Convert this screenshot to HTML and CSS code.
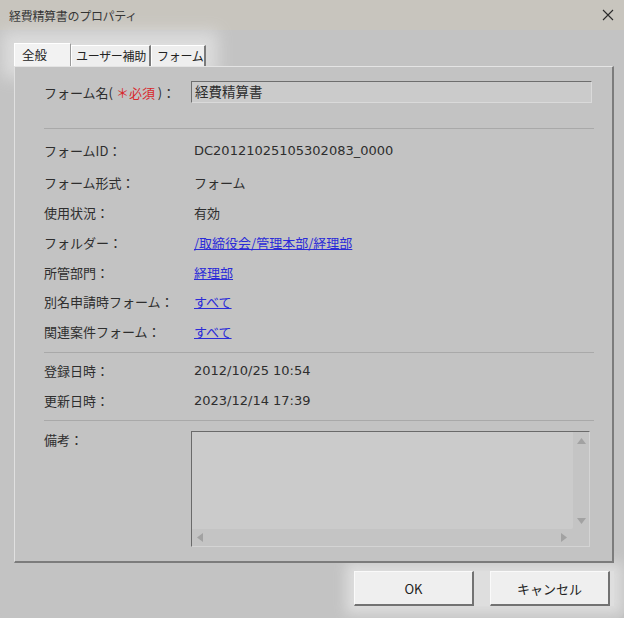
FILE: index.html
```html
<!DOCTYPE html>
<html lang="ja">
<head>
<meta charset="utf-8">
<title>経費精算書のプロパティ</title>
<link rel="stylesheet" href="styles.css">
</head>
<body>
<div class="window">
  <div class="titlebar">
    <span class="title">経費精算書のプロパティ</span>
    <svg class="close" width="12" height="12" viewBox="0 0 12 12"><path d="M1 1 L11 11 M11 1 L1 11" stroke="#2b2b2b" stroke-width="1.1" fill="none"/></svg>
  </div>
  <div class="body">
    <div class="tabs">
      <div class="tab active">全般</div>
      <div class="tab">ユーザー補助</div>
      <div class="tab">フォーム</div>
    </div>
    <div class="panel">
      <div class="row name-row">
        <div class="label">フォーム名( <span class="req">＊必須</span> )：</div>
        <div class="input">経費精算書</div>
      </div>
      <div class="sep first-sep"></div>
      <div class="group group-a">
        <div class="row info"><div class="label">フォームID：</div><div class="value">DC20121025105302083_0000</div></div>
        <div class="row info"><div class="label">フォーム形式：</div><div class="value">フォーム</div></div>
        <div class="row info"><div class="label">使用状況：</div><div class="value">有効</div></div>
        <div class="row info"><div class="label">フォルダー：</div><div class="value"><a href="#">/取締役会/管理本部/経理部</a></div></div>
        <div class="row info"><div class="label">所管部門：</div><div class="value"><a href="#">経理部</a></div></div>
        <div class="row info"><div class="label">別名申請時フォーム：</div><div class="value"><a href="#">すべて</a></div></div>
        <div class="row info"><div class="label">関連案件フォーム：</div><div class="value"><a href="#">すべて</a></div></div>
      </div>
      <div class="sep sep-a"></div>
      <div class="group group-b">
        <div class="row info"><div class="label">登録日時：</div><div class="value">2012/10/25 10:54</div></div>
        <div class="row info"><div class="label">更新日時：</div><div class="value">2023/12/14 17:39</div></div>
      </div>
      <div class="sep sep-b"></div>
      <div class="row memo-row">
        <div class="label memo-label">備考：</div>
        <div class="textarea">
          <div class="ta-main">
            <div class="ta-text"></div>
            <div class="vscroll">
              <svg width="9" height="6" viewBox="0 0 9 6"><path d="M0 6 L4.5 0 L9 6 Z" fill="#a2a2a2"/></svg>
              <svg width="9" height="6" viewBox="0 0 9 6"><path d="M0 0 L4.5 6 L9 0 Z" fill="#a2a2a2"/></svg>
            </div>
          </div>
          <div class="hscroll">
            <svg width="6" height="9" viewBox="0 0 6 9"><path d="M6 0 L0 4.5 L6 9 Z" fill="#a2a2a2"/></svg>
            <svg width="6" height="9" viewBox="0 0 6 9"><path d="M0 0 L6 4.5 L0 9 Z" fill="#a2a2a2"/></svg>
          </div>
        </div>
      </div>
    </div>
    <div class="buttons">
      <button class="btn">OK</button>
      <button class="btn">キャンセル</button>
    </div>
  </div>
</div>
</body>
</html>
```
FILE: styles.css
```css
html, body {
  margin: 0;
  padding: 0;
}
body {
  width: 624px;
  height: 618px;
  overflow: hidden;
  background: #c3c3c3;
  font-family: "DejaVu Sans", "Noto Sans CJK JP", sans-serif;
  font-size: 13px;
  color: #2e2e2e;
}
.window {
  width: 624px;
  height: 618px;
  background: #c3c3c3;
  border-bottom-left-radius: 6px;
  border-bottom-right-radius: 6px;
  overflow: hidden;
}
.titlebar {
  height: 30px;
  background: #c8c5be;
  display: flex;
  align-items: center;
  justify-content: space-between;
  padding: 0 9px 0 9px;
  box-sizing: border-box;
}
.title {
  font-family: "Noto Sans CJK JP", sans-serif;
  font-size: 12px;
  color: #333;
  letter-spacing: -0.3px;
}
.close {
  margin-right: 1px;
}
.body {
  padding: 13px 10px 0 14px;
}
.tabs {
  display: flex;
  align-items: flex-end;
  height: 23px;
  background: #dcdcdc;
  width: 192px;
  box-shadow: 0 0 16px 12px #dcdcdc;
  position: relative;
  z-index: 0;
}
.tab {
  font-family: "Noto Sans CJK JP", sans-serif;
  font-size: 12px;
  white-space: nowrap;
  height: 21px;
  line-height: 20px;
  padding: 0 0 0 4px;
  background: #eeeeee;
  border-top: 1px solid #ffffff;
  border-left: 1px solid #ffffff;
  border-right: 2px solid #7a7a7a;
  box-sizing: border-box;
  color: #222;
  overflow: hidden;
}
.tab.active {
  height: 24px;
  line-height: 22px;
  width: 57px;
  padding-left: 7px;
  font-size: 12.5px;
  background: #f2f2f2;
  border-right: 1px solid #9a9a9a;
  margin-bottom: -1px;
  position: relative;
  z-index: 2;
}
.tab:nth-child(2) { width: 80px; padding-left: 4px; letter-spacing: -0.3px; }
.tab:nth-child(3) { width: 55px; padding-left: 5px; letter-spacing: -0.3px; }
.panel {
  height: 497px;
  box-sizing: border-box;
  border-top: 1px solid #e4e4e4;
  border-left: 1px solid #e0e0e0;
  border-right: 2px solid #7c7c7c;
  border-bottom: 2px solid #7c7c7c;
  background: #c3c3c3;
  padding: 14px 16px 0 29px;
  position: relative;
  z-index: 1;
}
.row {
  display: flex;
  align-items: center;
}
.label {
  width: 147px;
  flex: none;
  font-family: "Noto Sans CJK JP", sans-serif;
  color: #2e2e2e;
  white-space: nowrap;
}
.req {
  color: #d8282c;
}
.name-row {
  height: 22px;
}
.input {
  width: 401px;
  height: 22px;
  box-sizing: border-box;
  background: #cbcbcb;
  border-top: 1px solid #6e6e6e;
  border-left: 1px solid #6e6e6e;
  border-right: 1px solid #dadada;
  border-bottom: 1px solid #dadada;
  padding-left: 3px;
  line-height: 19px;
  font-family: "Noto Sans CJK JP", sans-serif;
  font-size: 13.5px;
}
.sep {
  height: 1px;
  width: 550px;
  background: #a9a9a9;
}
.first-sep {
  margin-top: 25px;
  margin-bottom: 5px;
}
.sep-a {
  margin-top: 6px;
  margin-bottom: 2px;
}
.sep-b {
  margin-top: 5px;
  margin-bottom: 3px;
}
.info {
  height: 30px;
}
.group-a .info:first-child {
  height: 33px;
}
.group-a .info:nth-child(6) {
  height: 29px;
}
.value {
  padding-left: 3px;
  color: #2e2e2e;
}
.value a {
  color: #2b2bd8;
  text-decoration: underline;
  font-family: "Noto Sans CJK JP", sans-serif;
}
.memo-row {
  align-items: flex-start;
  margin-top: 10px;
}
.memo-label {
  line-height: 18px;
}
.textarea {
  width: 399px;
  height: 116px;
  box-sizing: border-box;
  border-top: 1px solid #6a6a6a;
  border-left: 1px solid #6a6a6a;
  border-right: 1px solid #d4d4d4;
  border-bottom: 1px solid #d4d4d4;
  background: #c4c4c4;
  display: flex;
  flex-direction: column;
}
.ta-main {
  flex: 1;
  display: flex;
}
.ta-text {
  flex: 1;
  background: #cbcbcb;
  border-bottom-right-radius: 2px;
}
.vscroll {
  width: 16px;
  display: flex;
  flex-direction: column;
  align-items: center;
  justify-content: space-between;
  padding: 6px 0 5px;
  box-sizing: border-box;
}
.hscroll {
  height: 17px;
  display: flex;
  align-items: center;
  justify-content: space-between;
  padding: 0 22px 0 5px;
}
.buttons {
  display: flex;
  justify-content: flex-end;
  gap: 16px;
  margin-top: 8px;
  margin-left: auto;
  width: 256px;
  padding-right: 4px;
  background: #dedede;
  box-shadow: 0 0 12px 8px #dedede;
}
.btn {
  width: 120px;
  height: 35px;
  box-sizing: border-box;
  background: #efefef;
  border-top: 1px solid #fafafa;
  border-left: 1px solid #fafafa;
  border-right: 2px solid #727272;
  border-bottom: 2px solid #727272;
  font-family: "Noto Sans CJK JP", sans-serif;
  font-size: 13px;
  color: #222;
  padding: 0;
}
```
